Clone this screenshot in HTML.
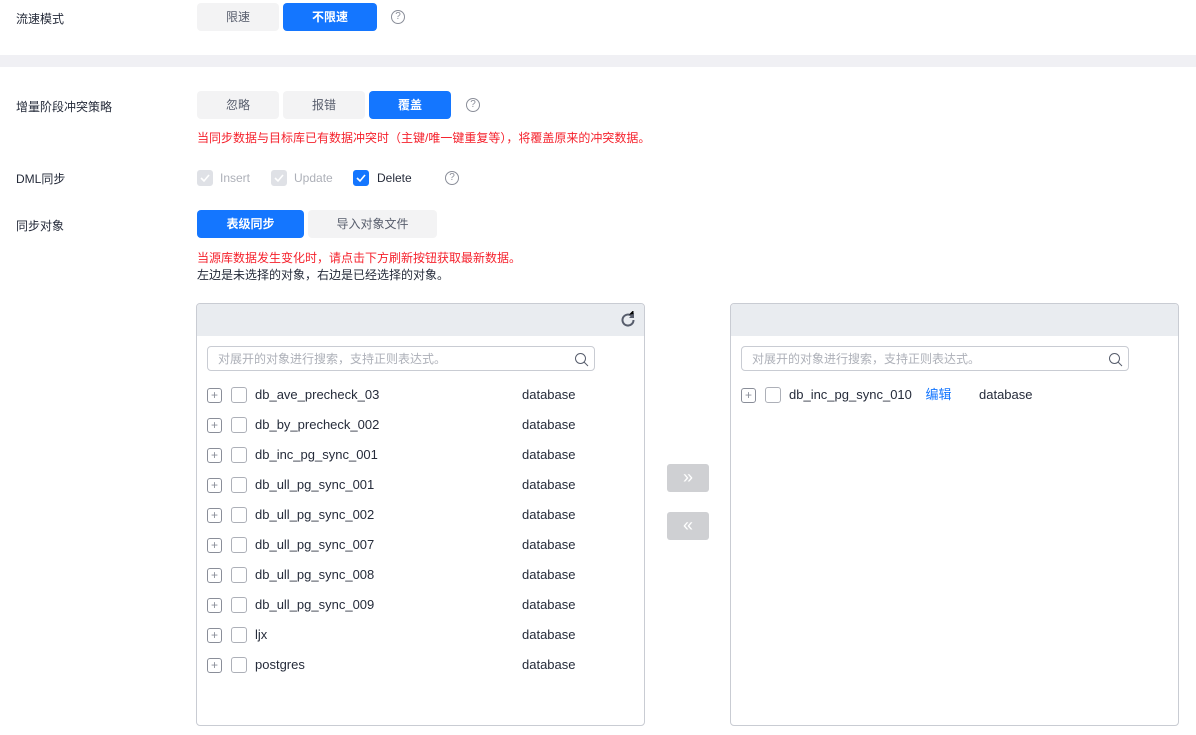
<!DOCTYPE html><html><head><meta charset="utf-8"><style>
body{margin:0;width:1196px;height:735px;background:#fff;font-family:"Liberation Sans","Noto Sans CJK SC",sans-serif;font-size:12px;color:#252b3a;position:relative;overflow:hidden}
.a{position:absolute}
.btn{position:absolute;height:28px;line-height:28px;text-align:center;background:#f3f3f4;color:#575d6c;border-radius:4px;font-size:12px}
.on{background:#1476ff;color:#fff;font-weight:bold}
.q{position:absolute;width:12px;height:12px;border:1px solid #8a8e99;border-radius:50%;font-size:10px;line-height:12px;text-align:center;color:#8a8e99}
.red{color:#f5222d}
.cb{position:absolute;width:14px;height:14px;border:1px solid #adb0b8;border-radius:3px;background:#fff}
.cbd{background:#dfe1e6;border-color:#dfe1e6}
.cbon{background:#1476ff;border-color:#1476ff}
.panel{position:absolute;top:303px;width:447px;height:421px;border:1px solid #c9ccd3;border-radius:4px;overflow:hidden}
.ph{height:32px;background:#e9ecf0}
.search{position:absolute;left:10px;top:42px;width:388px;height:25px;border:1px solid #c9ccd3;border-radius:4px;color:#adb0b8;line-height:25px;padding-left:10px;box-sizing:border-box;font-size:12px}
.row{position:absolute;left:10px;height:20px;font-size:13px;color:#252b3a}
.pl{position:absolute;left:0;top:3px;width:13px;height:13px;border:1px solid #8a8e99;border-radius:3px;font-size:12px;line-height:12px;text-align:center;color:#8a8e99}
.row .cb{left:24px;top:2px}
.nm{position:absolute;left:48px;top:0;line-height:20px;white-space:nowrap}
.tp{position:absolute;left:315px;top:0;line-height:20px}
.tb{position:absolute;left:667px;width:42px;height:28px;background:#cfd0d3;border-radius:3px;color:#fff;text-align:center;line-height:26px;font-size:18px}
</style></head><body>
<div class="a" style="left:16px;top:10px">流速模式</div>
<div class="btn" style="left:197px;top:3px;width:82px">限速</div>
<div class="btn on" style="left:283px;top:3px;width:94px">不限速</div>
<div class="q" style="left:391px;top:10px">?</div>
<div class="a" style="left:0;top:55px;width:1196px;height:12px;background:#f0f0f4"></div>

<div class="a" style="left:16px;top:98px">增量阶段冲突策略</div>
<div class="btn" style="left:197px;top:91px;width:82px">忽略</div>
<div class="btn" style="left:283px;top:91px;width:82px">报错</div>
<div class="btn on" style="left:369px;top:91px;width:82px">覆盖</div>
<div class="q" style="left:466px;top:98px">?</div>
<div class="a red" style="left:197px;top:129px">当同步数据与目标库已有数据冲突时（主键/唯一键重复等），将覆盖原来的冲突数据。</div>

<div class="a" style="left:16px;top:170px">DML同步</div>
<div class="cb cbd" style="left:197px;top:170px"><svg width="14" height="14"><path d="M3 7l3 3 5-6" stroke="#fff" stroke-width="1.6" fill="none"/></svg></div>
<div class="a" style="left:220px;top:171px;color:#adb0b8">Insert</div>
<div class="cb cbd" style="left:271px;top:170px"><svg width="14" height="14"><path d="M3 7l3 3 5-6" stroke="#fff" stroke-width="1.6" fill="none"/></svg></div>
<div class="a" style="left:294px;top:171px;color:#adb0b8">Update</div>
<div class="cb cbon" style="left:353px;top:170px"><svg width="14" height="14"><path d="M3 7l3 3 5-6" stroke="#fff" stroke-width="1.6" fill="none"/></svg></div>
<div class="a" style="left:377px;top:171px">Delete</div>
<div class="q" style="left:445px;top:171px">?</div>

<div class="a" style="left:16px;top:217px">同步对象</div>
<div class="btn on" style="left:197px;top:210px;width:107px">表级同步</div>
<div class="btn" style="left:308px;top:210px;width:129px">导入对象文件</div>
<div class="a red" style="left:197px;top:249px">当源库数据发生变化时，请点击下方刷新按钮获取最新数据。</div>
<div class="a" style="left:197px;top:266px">左边是未选择的对象，右边是已经选择的对象。</div>

<div class="panel" style="left:196px"><div class="ph"></div>
<svg class="a" style="left:422px;top:7px" width="18" height="18" viewBox="0 0 18 18"><path d="M14.5 9A5.5 5.5 0 1 1 12.5 4.8" stroke="#575d6c" stroke-width="2" fill="none"/><path d="M10 3.5h4.5V-1" stroke="none"/><path d="M15 2v5h-5z" fill="#575d6c"/></svg>
<div class="search">对展开的对象进行搜索，支持正则表达式。<svg class="a" style="right:5px;top:5px" width="15" height="15"><circle cx="6.5" cy="6.5" r="5" stroke="#575d6c" fill="none"/><path d="M10 10l4 4" stroke="#575d6c"/></svg></div>
<div class="row" style="top:81px"><div class="pl">+</div><div class="cb"></div><div class="nm">db_ave_precheck_03</div><div class="tp">database</div></div>
<div class="row" style="top:111px"><div class="pl">+</div><div class="cb"></div><div class="nm">db_by_precheck_002</div><div class="tp">database</div></div>
<div class="row" style="top:141px"><div class="pl">+</div><div class="cb"></div><div class="nm">db_inc_pg_sync_001</div><div class="tp">database</div></div>
<div class="row" style="top:171px"><div class="pl">+</div><div class="cb"></div><div class="nm">db_ull_pg_sync_001</div><div class="tp">database</div></div>
<div class="row" style="top:201px"><div class="pl">+</div><div class="cb"></div><div class="nm">db_ull_pg_sync_002</div><div class="tp">database</div></div>
<div class="row" style="top:231px"><div class="pl">+</div><div class="cb"></div><div class="nm">db_ull_pg_sync_007</div><div class="tp">database</div></div>
<div class="row" style="top:261px"><div class="pl">+</div><div class="cb"></div><div class="nm">db_ull_pg_sync_008</div><div class="tp">database</div></div>
<div class="row" style="top:291px"><div class="pl">+</div><div class="cb"></div><div class="nm">db_ull_pg_sync_009</div><div class="tp">database</div></div>
<div class="row" style="top:321px"><div class="pl">+</div><div class="cb"></div><div class="nm">ljx</div><div class="tp">database</div></div>
<div class="row" style="top:351px"><div class="pl">+</div><div class="cb"></div><div class="nm">postgres</div><div class="tp">database</div></div>
</div>

<div class="tb" style="top:464px">»</div>
<div class="tb" style="top:512px">«</div>

<div class="panel" style="left:730px"><div class="ph"></div>
<div class="search">对展开的对象进行搜索，支持正则表达式。<svg class="a" style="right:5px;top:5px" width="15" height="15"><circle cx="6.5" cy="6.5" r="5" stroke="#575d6c" fill="none"/><path d="M10 10l4 4" stroke="#575d6c"/></svg></div>
<div class="row" style="top:81px"><div class="pl">+</div><div class="cb"></div><div class="nm">db_inc_pg_sync_010 <span style="color:#1476ff;margin-left:10px">编辑</span></div><div class="tp" style="left:238px">database</div></div>
</div>
</body></html>
